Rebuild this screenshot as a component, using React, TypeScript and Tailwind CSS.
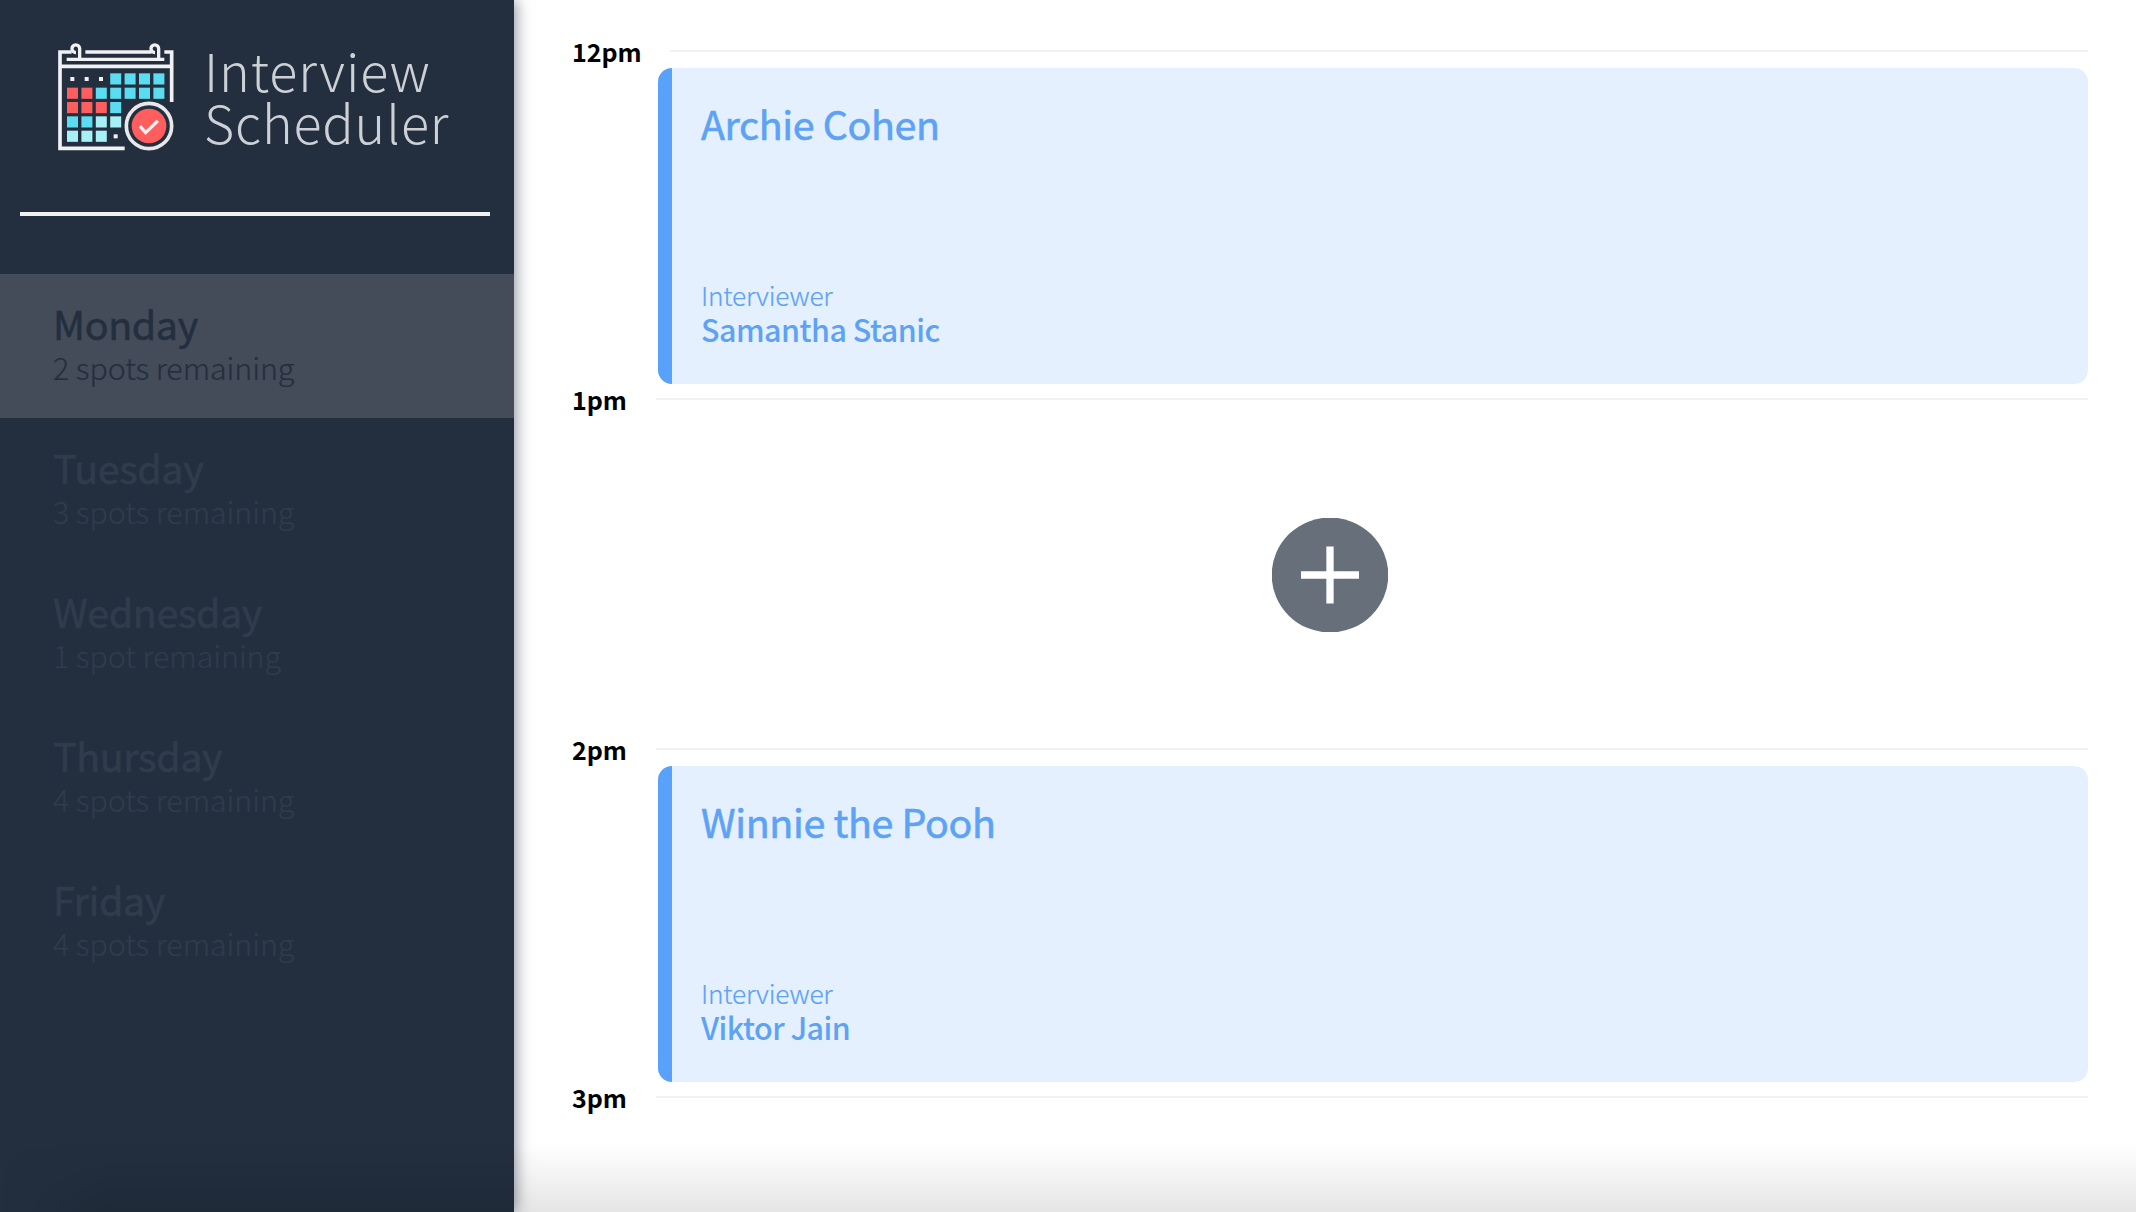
const days = [
  { name: "Monday", spots: "2 spots remaining", selected: true },
  { name: "Tuesday", spots: "3 spots remaining" },
  { name: "Wednesday", spots: "1 spot remaining" },
  { name: "Thursday", spots: "4 spots remaining" },
  { name: "Friday", spots: "4 spots remaining" },
];

const C = "#5cdcf0";
const L = "#a6f0f6";
const R = "#ff5e5e";

const cells: [number, number, string][] = [
  [3, 0, C], [4, 0, C], [5, 0, C], [6, 0, C],
  [0, 1, R], [1, 1, R], [2, 1, C], [3, 1, C], [4, 1, C], [5, 1, C], [6, 1, C],
  [0, 2, R], [1, 2, R], [2, 2, R], [3, 2, C],
  [0, 3, C], [1, 3, C], [2, 3, L], [3, 3, L],
  [0, 4, L], [1, 4, L], [2, 4, L],
];

function CalendarIcon() {
  return (
    <svg className="h-[130px] w-[150px] shrink-0" viewBox="0 0 450 390" fill="none">
      <g stroke="#f0f1f3" strokeWidth="11">
        <path d="M95 66H60V355H254" />
        <path d="M136 66H335M373 66H395V216" />
        <path d="M80 88H373" strokeWidth="10" />
        <path d="M60 109H395" />
        <path d="M119 85V56a11.500 11.500 0 1 0-11 11.500" strokeWidth="10" />
        <path d="M356 85V56a11.500 11.500 0 1 0-11 11.500" strokeWidth="10" />
      </g>
      {cells.map(([x, y, c]) => (
        <rect key={`${x}-${y}`} x={81 + x * 43.2} y={130 + y * 43} width="33" height="33.500" fill={c} />
      ))}
      <g fill="#f0f1f3">
        <rect x="91" y="141" width="12" height="12" />
        <rect x="134" y="141" width="12" height="12" />
        <rect x="177" y="141" width="12" height="12" />
        <rect x="221" y="313" width="12" height="12" />
      </g>
      <circle cx="327" cy="288" r="68" fill="#232f3f" stroke="#e6e8ea" strokeWidth="11" />
      <circle cx="327" cy="288" r="52" fill={R} />
      <path d="M303 292L317 308L350 276" stroke="#f7eeee" strokeWidth="10" strokeLinecap="square" />
    </svg>
  );
}

function TimeRow({ time, first }: { time: string; first?: boolean }) {
  return (
    <div className="flex h-0 items-center">
      <h4 className="shrink-0 pl-[1px] text-[25px] leading-[30px] font-bold text-black">{time}</h4>
      <div className={first ? "ml-auto h-0.5 w-[1418px] bg-[#f1f1f1]" : "ml-auto h-0.5 w-[1432px] bg-[#f1f1f1]"} />
    </div>
  );
}

function Card({ student, interviewer }: { student: string; interviewer: string }) {
  return (
    <section className="ml-auto flex h-[316px] w-[1430px] flex-col justify-between rounded-[14px] border-l-[14px] border-[#59a2fb] bg-[#e4f0fe] pt-[35px] pr-8 pb-[37px] pl-[29px] text-[#5da2f5]">
      <h2 className="text-[39.400px] leading-[40px] tracking-[-0.360px] [-webkit-text-stroke:0.6px_currentColor]">{student}</h2>
      <div>
        <h4 className="text-[26.300px] leading-[33px] font-light tracking-[-0.220px] [-webkit-text-stroke:0.2px_currentColor]">Interviewer</h4>
        <h3 className="text-[30.400px] leading-[36px] font-medium tracking-[-0.500px]">{interviewer}</h3>
      </div>
    </section>
  );
}

export default function App() {
  return (
    <main className="relative flex h-[1212px] w-[2136px] overflow-hidden bg-white font-['Noto_Sans_CJK_SC',sans-serif]">
      <aside className="z-10 flex w-[514px] shrink-0 flex-col bg-[#232f3f] shadow-[2px_0_14px_rgba(30,40,60,0.5)]">
        <div className="flex h-[212px] pt-[30px] pl-[40px]">
          <CalendarIcon />
          <div className="ml-[14px] pt-[14px] text-[52px] leading-[52px] font-light text-[#cdd1d6]">
            <div className="tracking-[0.900px]">Interview</div>
            <div className="tracking-[0.900px]">Scheduler</div>
          </div>
        </div>
        <div className="mx-5 mr-6 h-1 shrink-0 bg-[#f1f1f1]" />
        <ul className="mt-[58px]">
          {days.map((d) => (
            <li
              key={d.name}
              className={
                d.selected
                  ? "h-36 bg-[#434c58] pt-[29px] pl-[53px] text-[#232f3f]"
                  : "h-36 pt-[29px] pl-[53px] text-[#303c4c]"
              }
            >
              <h2 className="text-[39.400px] leading-[40px] tracking-[-0.360px] [-webkit-text-stroke:0.6px_currentColor]">{d.name}</h2>
              <h3 className="pt-[2px] text-[30.400px] leading-[44px] font-light tracking-[-0.080px] [-webkit-text-stroke:0.2px_currentColor]">{d.spots}</h3>
            </li>
          ))}
        </ul>
      </aside>

      <section className="flex grow flex-col pt-[51px] pr-12 pl-[57px]">
        <TimeRow time="12pm" first />
        <div className="pt-[17px] pb-[15px]">
          <Card student="Archie Cohen" interviewer="Samantha Stanic" />
        </div>
        <TimeRow time="1pm" />
        <div className="flex h-[350px] items-center justify-center pt-[2px] pl-[1px]">
          <svg className="h-[114px] w-[116px]" viewBox="0 0 116 114">
            <ellipse cx="58" cy="57" rx="58.300" ry="57.500" fill="#666f7a" />
            <path d="M29 57H87M58 28.500V85.500" stroke="#fff" strokeWidth="7.300" />
          </svg>
        </div>
        <TimeRow time="2pm" />
        <div className="pt-[17px] pb-[15px]">
          <Card student="Winnie the Pooh" interviewer="Viktor Jain" />
        </div>
        <TimeRow time="3pm" />
      </section>

      <div className="absolute inset-x-0 bottom-0 z-20 h-[68px] bg-linear-to-b from-transparent to-black/10 [mask-image:linear-gradient(to_right,transparent,black_110px)]" />
    </main>
  );
}
